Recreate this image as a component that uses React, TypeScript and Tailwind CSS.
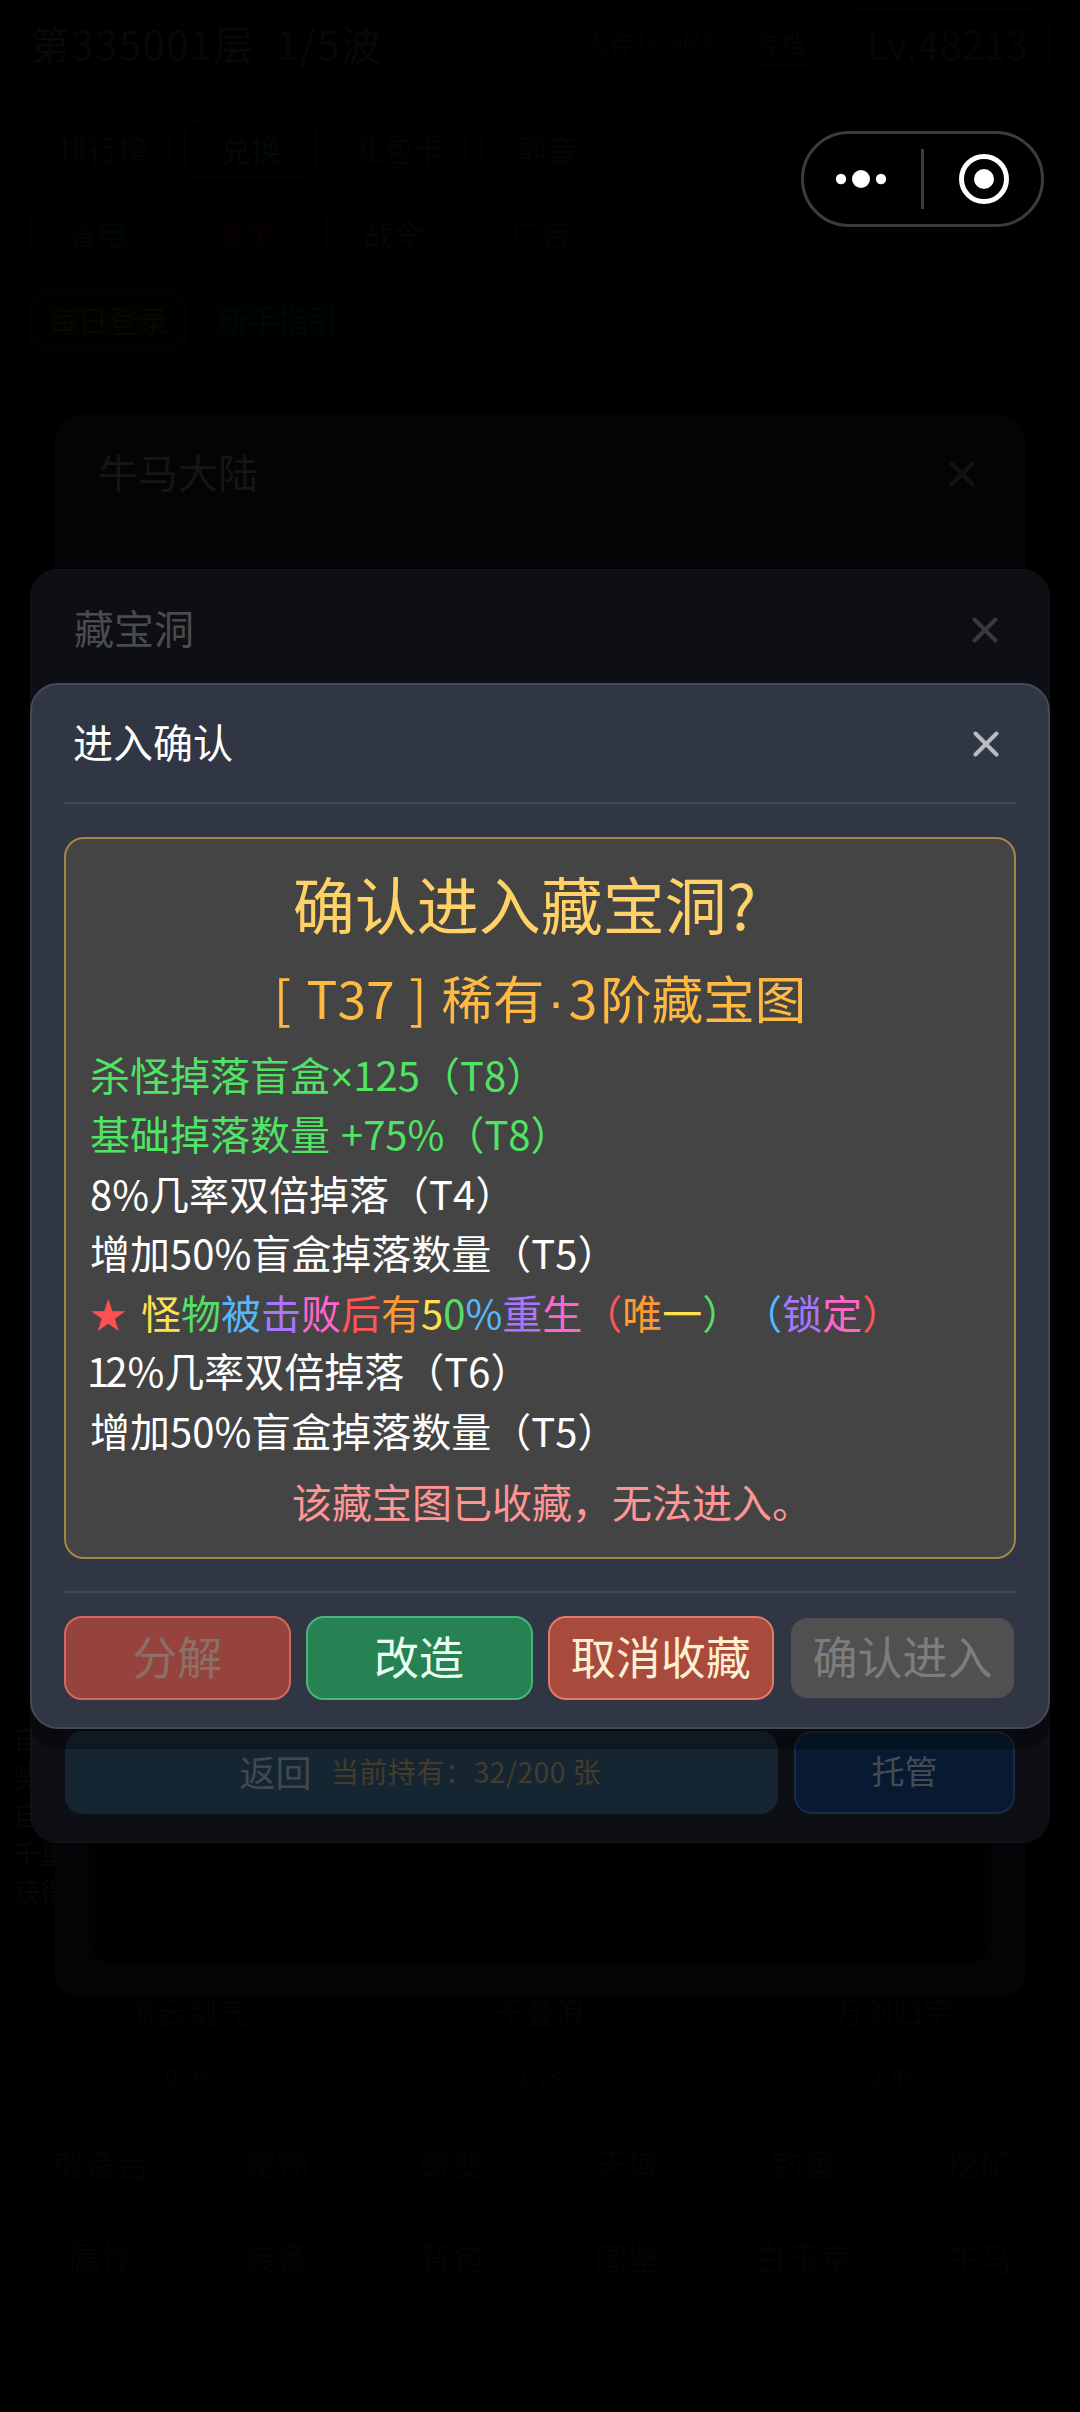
import React from "react";

const FONT = "font-['Noto_Sans_CJK_SC',sans-serif]";

type Run = { t: string; c: string };

function Close({ className }: { className: string }) {
  return (
    <svg viewBox="0 0 26 26" className={`h-[26px] w-[26px] ${className}`} fill="none" stroke="currentColor" strokeWidth="4" strokeLinecap="round">
      <path d="M2.5 2.5 23.5 23.5M23.5 2.5 2.5 23.5" />
    </svg>
  );
}

const RAINBOW: Run[] = [
  { t: "怪", c: "text-[#ffe14d]" },
  { t: "物", c: "text-[#55dd66]" },
  { t: "被", c: "text-[#55b8ff]" },
  { t: "击", c: "text-[#a875ff]" },
  { t: "败", c: "text-[#ff66cc]" },
  { t: "后", c: "text-[#ff5555]" },
  { t: "有", c: "text-[#ff9933]" },
  { t: "5", c: "text-[#ffe14d]" },
  { t: "0", c: "text-[#55dd66]" },
  { t: "%", c: "text-[#55b8ff]" },
  { t: "重", c: "text-[#a875ff]" },
  { t: "生", c: "text-[#ff66cc]" },
  { t: "（", c: "text-[#ff5555]" },
  { t: "唯", c: "text-[#ff9933]" },
  { t: "一", c: "text-[#ffe14d]" },
  { t: "）", c: "text-[#55dd66]" },
  { t: "（", c: "ml-[20px] text-[#55b8ff]" },
  { t: "锁", c: "text-[#a875ff]" },
  { t: "定", c: "text-[#ff66cc]" },
  { t: "）", c: "text-[#ff5555]" },
];

function Line({ children, className = "text-white" }: { children: React.ReactNode; className?: string }) {
  return <div className={`h-[59.3px] whitespace-pre text-[40px] leading-[59px] ${className}`}>{children}</div>;
}

function Chip({ children, className }: { children: React.ReactNode; className: string }) {
  return (
    <div className={`flex h-[60px] items-center justify-center rounded-[16px] border-2 pb-[3px] text-[30px] leading-none ${className}`}>{children}</div>
  );
}

function GameScreen() {
  return (
    <div className="flex h-[2412px] flex-col bg-black opacity-65">
      <div className="flex h-[88px] shrink-0 items-center pr-[30px] pb-[3px] pl-[30px] text-[40px] text-[#0d0d0d]">
        <span className="tracking-[1.5px] whitespace-pre">第335001层  1/5波</span>
        <span className="ml-auto text-[25px] text-[#070707]">内存16.9MB</span>
        <span className="ml-[24px] flex h-[46px] w-[76px] items-center justify-center rounded-[14px] border-2 border-[#060606] text-[24px] text-[#090909]">存档</span>
        <span className="ml-[26px] flex h-[70px] w-[205px] items-center justify-center rounded-[14px] border-2 border-[#050505] text-[#0a0a0a]">Lv.48213</span>
      </div>
      <div className="h-[16px] w-[1044px] shrink-0 bg-[#020309]" />
      <div className="flex gap-[14px] pt-[15px] pl-[36px] text-[#080808]">
        <Chip className="w-[134px] border-[#040505]">排行榜</Chip>
        <Chip className="w-[134px] border-[#020908] text-[#040f0d]">兑换</Chip>
        <Chip className="w-[134px] border-[#040505]">礼包卡</Chip>
        <Chip className="w-[134px] border-[#040505]">静音</Chip>
      </div>
      <div className="flex gap-[14px] pt-[24px] pl-[30px] text-[#070707]">
        <Chip className="w-[134px] border-[#040505] text-[#020a0a]">省电</Chip>
        <Chip className="w-[134px] border-black text-[#0f0202]">氪金</Chip>
        <Chip className="w-[134px] border-[#040505] text-[#0a0a04]">战令</Chip>
        <Chip className="w-[134px] border-black">广告</Chip>
      </div>
      <div className="flex gap-[12px] pt-[27px] pl-[29px]">
        <Chip className="w-[158px] border-[#0b0700] bg-[#030200] text-[#0f0c03]">每日登录</Chip>
        <Chip className="w-[158px] border-[#010504] bg-[#010302] text-[#030d0a]">新手指引</Chip>
      </div>
      <div className="mt-[1370px] flex flex-col pl-[13px] text-[27px] text-[#0b0b0b]">
        <span className="h-[38px] leading-[38px]">自动</span>
        <span className="h-[38px] leading-[38px]">奖励</span>
        <span className="h-[38px] leading-[38px]">自动</span>
        <span className="h-[38px] leading-[38px]">千重</span>
        <span className="h-[38px] leading-[38px]">获得</span>
      </div>
      <div className="mt-[64px] flex justify-between px-[29px] text-[30px] text-[#060808]">
        {[["流云剑气", "0.9s"], ["千叠浪", "1.2s"], ["万剑归宗", "1.4s"]].map(([a, b]) => (
          <div key={a} className="flex w-[316px] flex-col items-center">
            <div className="flex h-[76px] w-full items-center justify-center rounded-b-[20px] border-2 border-t-0 border-[#040404]">{a}</div>
            <div className="mt-[6px] text-[24px] leading-[38px]">{b}</div>
          </div>
        ))}
      </div>
      <div className="mt-auto mb-[109px] grid grid-cols-6 gap-x-[16px] gap-y-[8px] px-[21px] text-[33px] text-[#070708]">
        {["锻造台", "宠物", "蜕变", "天域", "钓鱼", "挖矿", "属性", "装备", "背包", "图鉴", "白玉京", "牛马"].map((t) => (
          <div key={t} className={`flex h-[86px] items-center justify-center rounded-[20px] border-2 border-[#040404] pb-[4px] ${t === "锻造台" || t === "装备" ? "text-[#0b0502]" : ""}`}>{t}</div>
        ))}
      </div>
    </div>
  );
}

const BTN = "flex h-[84px] items-center justify-center rounded-[18px] border-2 pb-[6px] text-[45px] leading-none";

export default function App() {
  return (
    <div className={`relative h-[2412px] w-[1080px] overflow-hidden bg-black ${FONT}`}>
      <GameScreen />

      {/* outermost dialog: continent */}
      <div className="absolute top-[414px] left-[54px] flex h-[1584px] w-[972px] flex-col rounded-[28px] bg-[#030406] px-[35px] pb-[36px]">
        <div className="flex h-[120px] shrink-0 items-center justify-between pr-[16px] pl-[9px] text-[40px] text-[#151516]">
          <span className="pb-[6px]">牛马大陆</span>
          <Close className="text-[#121213]" />
        </div>
        <div className="mt-[80px] flex-1 rounded-[20px] bg-[#010102]" />
      </div>

      {/* middle dialog: treasure cave */}
      <div className="absolute top-[569px] left-[30px] flex h-[1274px] w-[1020px] flex-col justify-between rounded-[28px] border border-[#131418] bg-[#0e0f14] px-[34px] pb-[28px]">
        <div className="flex h-[120px] items-center justify-between pr-[17px] pl-[9px] text-[40px] text-[#4a4b4d]">
          <span className="pb-[7px]">藏宝洞</span>
          <Close className="text-[#38393a]" />
        </div>
        <div className="flex gap-[16px]">
          <div className="flex h-[83px] w-[713px] items-center justify-center rounded-[18px] bg-[#152532] pr-[2px] pb-[4px] text-[36px] text-[#42494e]">
            返回
            <span className="ml-[19px] text-[28px] tracking-[0.6px] text-[#453c2b]">当前持有：32/200 张</span>
          </div>
          <div className="flex h-[83px] flex-1 items-center justify-center rounded-[18px] border-2 border-[#1a2a40] bg-[#081a31] pb-[3px] text-[33px] text-[#434b54]">托管</div>
        </div>
      </div>

      {/* front dialog: confirmation */}
      <div className="absolute top-[683px] left-[30px] flex h-[1046px] w-[1020px] flex-col rounded-[28px] border-2 border-[#454857] bg-[#313644] px-[32px] shadow-[0_20px_0_rgba(0,0,0,0.3)]">
        <div className="flex h-[119px] items-center justify-between border-b-2 border-[#434655] pr-[17px] pl-[9px] text-[40px] text-white">
          <span className="pb-[5px]">进入确认</span>
          <Close className="text-[#b8bbc1]" />
        </div>
        <div className="mt-[33px] flex h-[722px] flex-col rounded-[20px] border-2 border-[#a5853f] bg-[#444444] px-[24px]">
          <div className="mt-[18px] h-[94px] pr-[31px] text-center text-[62px] leading-[92px] text-[#ffd166]">确认进入藏宝洞?</div>
          <div className="h-[94px] text-center text-[51.5px] leading-[92px] whitespace-pre text-[#ffb940]">
            [<span className="ml-[4px]"> T37 </span><span className="ml-[3px]">]</span><span className="ml-[15px]">稀有</span>
            <span className="mx-[3px] font-['Liberation_Sans']">·</span>
            <span className="mr-[3px] ml-[1px]">3</span>阶藏宝图
          </div>
          <Line className="text-[#51e364]">
            杀怪掉落盲盒<span className="font-['Liberation_Sans']">×</span>125（T8）
          </Line>
          <Line className="text-[#51e364]">基础掉落数量<span className="ml-[2px]"> +75%（T8）</span></Line>
          <Line>8%几率双倍掉落（T4）</Line>
          <Line>增加50%盲盒掉落数量（T5）</Line>
          <Line className="pt-[1px] text-white">
            <span className="inline-block w-[51px] text-[36px] leading-none text-[#ff5050]">★</span>
            {RAINBOW.map((r, i) => (
              <span key={i} className={r.c}>{r.t}</span>
            ))}
          </Line>
          <Line><span className="-ml-[3px] tracking-[-4px]">1</span>2%几率双倍掉落（T6）</Line>
          <Line>增加50%盲盒掉落数量（T5）</Line>
          <div className="mt-[12px] pl-[24px] text-center text-[40px] leading-[59px] text-[#ff9494]">该藏宝图已收藏，无法进入。</div>
        </div>
        <div className="mt-[32px] grid grid-cols-4 gap-[15px] border-t-2 border-[#434655] pt-[23px]">
          <div className={`${BTN} border-[#d4675f] bg-[#96433d] text-[#8b7069]`}>分解</div>
          <div className={`${BTN} border-[#48b67b] bg-[#268153] text-[#eafff2]`}>改造</div>
          <div className={`${BTN} border-[#e07a6c] bg-[#a84a3c] text-[#ffefd2]`}>取消收藏</div>
          <div className={`${BTN} border-transparent bg-[#505050] bg-clip-padding text-[#7d7d7d]`}>确认进入</div>
        </div>
      </div>

      {/* mini-program capsule */}
      <div className="absolute top-[131px] left-[801px] flex h-[96px] w-[243px] items-center rounded-full border-[3px] border-[#3c3c3c] bg-black">
        <svg viewBox="0 0 237 90" className="h-[90px] w-[237px]" fill="white">
          <circle cx="37" cy="45" r="5.2" />
          <circle cx="57" cy="45" r="9" />
          <circle cx="77" cy="45" r="5.2" />
          <rect x="117" y="15" width="3" height="60" fill="#3c3c3c" />
          <circle cx="180" cy="45" r="22.5" fill="none" stroke="white" strokeWidth="5" />
          <circle cx="180" cy="45" r="10" />
        </svg>
      </div>
    </div>
  );
}
